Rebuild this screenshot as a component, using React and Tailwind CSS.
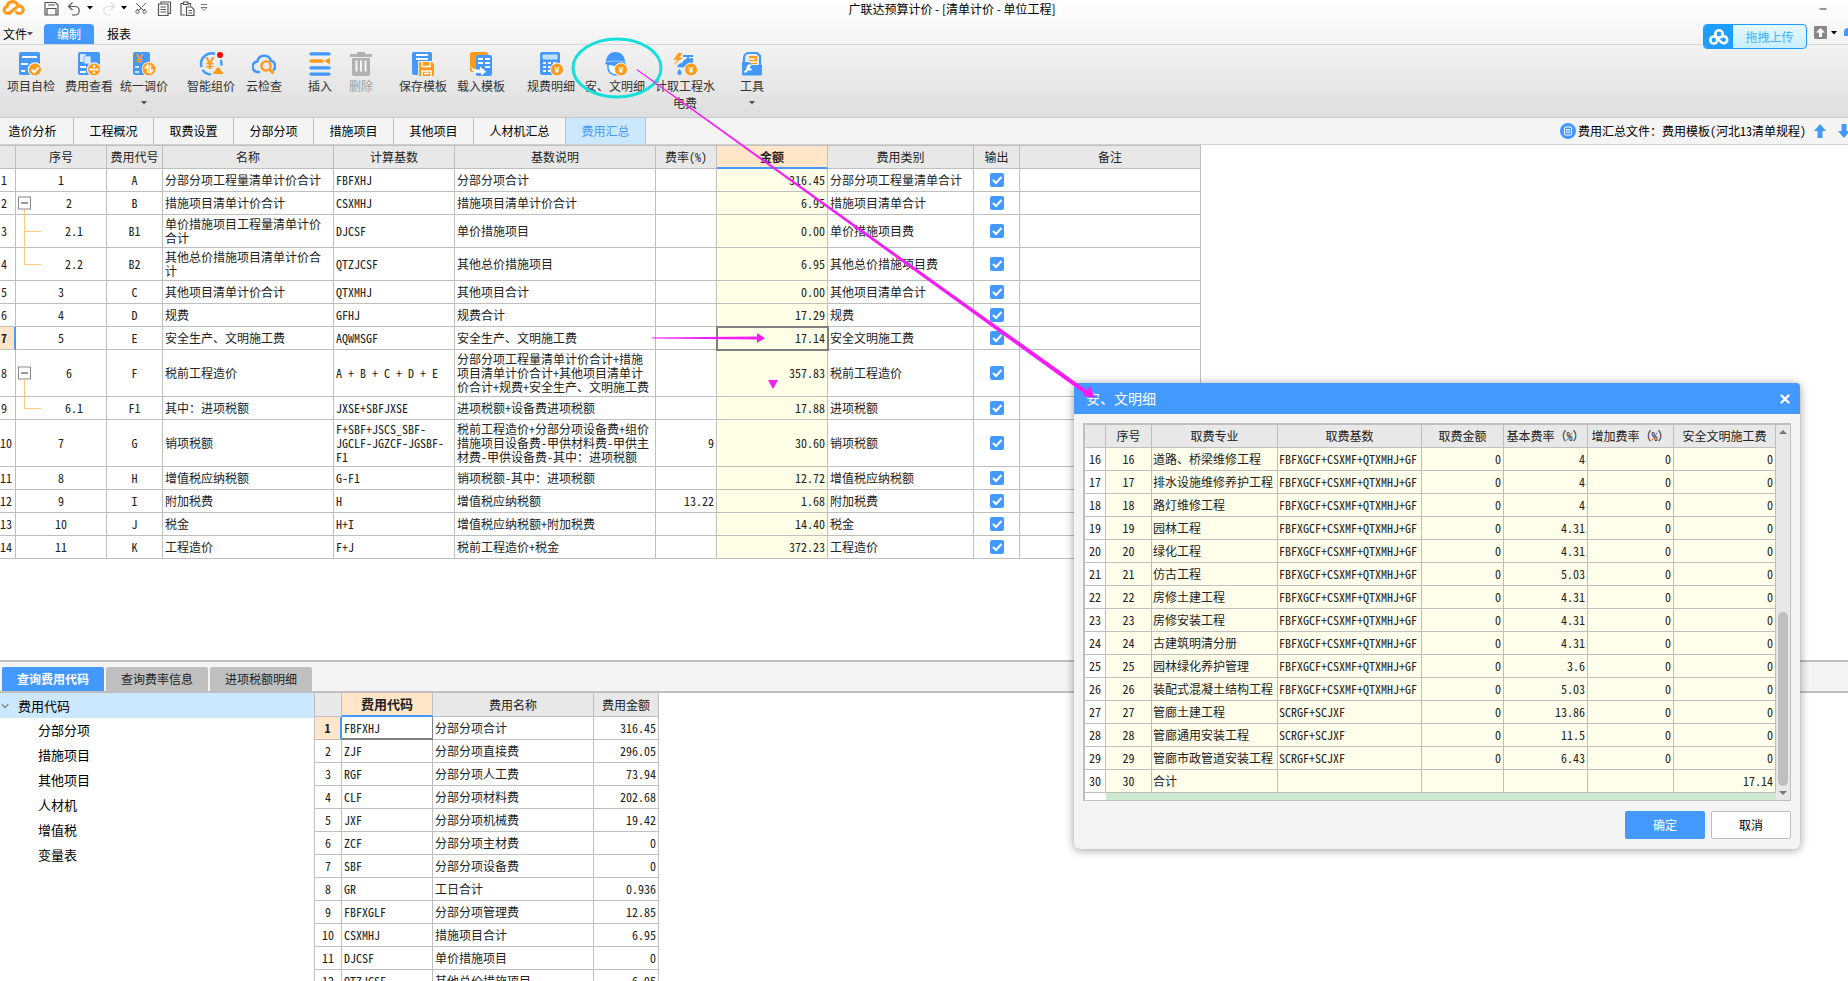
import { ChevronDown, Minus, Scissors, X } from 'lucide-react';

const BLUE = '#4499ff';
const ORANGE = '#ff9a1a';

const TABS = [
	{ label: '造价分析', width: 'w-[74px] pr-2' },
	{ label: '工程概况', width: 'w-20' },
	{ label: '取费设置', width: 'w-20' },
	{ label: '分部分项', width: 'w-20' },
	{ label: '措施项目', width: 'w-20' },
	{ label: '其他项目', width: 'w-20' },
	{ label: '人材机汇总', width: 'w-[92px]' },
	{ label: '费用汇总', width: 'w-20', active: true },
];

const FEES = [
	{ no: '1', code: 'A', name: '分部分项工程量清单计价合计', base: 'FBFXHJ', desc: '分部分项合计', amount: '316.45', kind: '分部分项工程量清单合计' },
	{ no: '2', code: 'B', name: '措施项目清单计价合计', base: 'CSXMHJ', desc: '措施项目清单计价合计', amount: '6.95', kind: '措施项目清单合计', tree: 'open' },
	{ no: '2.1', code: 'B1', name: '单价措施项目工程量清单计价\n合计', base: 'DJCSF', desc: '单价措施项目', amount: '0.00', kind: '单价措施项目费', tree: 'child', h: 'h-[33px]' },
	{ no: '2.2', code: 'B2', name: '其他总价措施项目清单计价合\n计', base: 'QTZJCSF', desc: '其他总价措施项目', amount: '6.95', kind: '其他总价措施项目费', tree: 'last', h: 'h-[33px]' },
	{ no: '3', code: 'C', name: '其他项目清单计价合计', base: 'QTXMHJ', desc: '其他项目合计', amount: '0.00', kind: '其他项目清单合计' },
	{ no: '4', code: 'D', name: '规费', base: 'GFHJ', desc: '规费合计', amount: '17.29', kind: '规费' },
	{ no: '5', code: 'E', name: '安全生产、文明施工费', base: 'AQWMSGF', desc: '安全生产、文明施工费', amount: '17.14', kind: '安全文明施工费', selected: true },
	{ no: '6', code: 'F', name: '税前工程造价', base: 'A + B + C + D + E', desc: '分部分项工程量清单计价合计+措施\n项目清单计价合计+其他项目清单计\n价合计+规费+安全生产、文明施工费', amount: '357.83', kind: '税前工程造价', tree: 'open', h: 'h-[47px]' },
	{ no: '6.1', code: 'F1', name: '其中：进项税额', base: 'JXSE+SBFJXSE', desc: '进项税额+设备费进项税额', amount: '17.88', kind: '进项税额', tree: 'last' },
	{ no: '7', code: 'G', name: '销项税额', base: 'F+SBF+JSCS_SBF-\nJGCLF-JGZCF-JGSBF-\nF1', desc: '税前工程造价+分部分项设备费+组价\n措施项目设备费-甲供材料费-甲供主\n材费-甲供设备费-其中：进项税额', rate: '9', amount: '30.60', kind: '销项税额', h: 'h-[47px]' },
	{ no: '8', code: 'H', name: '增值税应纳税额', base: 'G-F1', desc: '销项税额-其中：进项税额', amount: '12.72', kind: '增值税应纳税额' },
	{ no: '9', code: 'I', name: '附加税费', base: 'H', desc: '增值税应纳税额', rate: '13.22', amount: '1.68', kind: '附加税费' },
	{ no: '10', code: 'J', name: '税金', base: 'H+I', desc: '增值税应纳税额+附加税费', amount: '14.40', kind: '税金' },
	{ no: '11', code: 'K', name: '工程造价', base: 'F+J', desc: '税前工程造价+税金', amount: '372.23', kind: '工程造价' },
];

const CODES = [
	['FBFXHJ', '分部分项合计', '316.45'],
	['ZJF', '分部分项直接费', '296.05'],
	['RGF', '分部分项人工费', '73.94'],
	['CLF', '分部分项材料费', '202.68'],
	['JXF', '分部分项机械费', '19.42'],
	['ZCF', '分部分项主材费', '0'],
	['SBF', '分部分项设备费', '0'],
	['GR', '工日合计', '0.936'],
	['FBFXGLF', '分部分项管理费', '12.85'],
	['CSXMHJ', '措施项目合计', '6.95'],
	['DJCSF', '单价措施项目', '0'],
	['QTZJCSF', '其他总价措施项目', '6.95'],
];

const LONG_BASE = 'FBFXGCF+CSXMF+QTXMHJ+GF';
const SHORT_BASE = 'SCRGF+SCJXF';
const DETAILS = [
	[16, '道路、桥梁维修工程', LONG_BASE, '0', '4', '0', '0'],
	[17, '排水设施维修养护工程', LONG_BASE, '0', '4', '0', '0'],
	[18, '路灯维修工程', LONG_BASE, '0', '4', '0', '0'],
	[19, '园林工程', LONG_BASE, '0', '4.31', '0', '0'],
	[20, '绿化工程', LONG_BASE, '0', '4.31', '0', '0'],
	[21, '仿古工程', LONG_BASE, '0', '5.03', '0', '0'],
	[22, '房修土建工程', LONG_BASE, '0', '4.31', '0', '0'],
	[23, '房修安装工程', LONG_BASE, '0', '4.31', '0', '0'],
	[24, '古建筑明清分册', LONG_BASE, '0', '4.31', '0', '0'],
	[25, '园林绿化养护管理', LONG_BASE, '0', '3.6', '0', '0'],
	[26, '装配式混凝土结构工程', LONG_BASE, '0', '5.03', '0', '0'],
	[27, '管廊土建工程', SHORT_BASE, '0', '13.86', '0', '0'],
	[28, '管廊通用安装工程', SHORT_BASE, '0', '11.5', '0', '0'],
	[29, '管廊市政管道安装工程', SHORT_BASE, '0', '6.43', '0', '0'],
	[30, '合计', '', '', '', '', '17.14'],
];

/* ---------- icons ---------- */

function Icon({ children }) {
	return (
		<svg viewBox="0 0 24 24" className="w-6 h-6 flex-shrink-0" fill="none" aria-hidden="true">
			{children}
		</svg>
	);
}

function SmallIcon({ d, className = '' }) {
	return (
		<svg viewBox="0 0 15 15" className={`w-[15px] h-[15px] ${className}`} fill="none" stroke="currentColor" strokeWidth="1.2" aria-hidden="true">
			<path d={d} />
		</svg>
	);
}

const UNDO = 'M5.5 1.5L1.5 5.5l4 3.5M1.5 5.5H8a4 4 0 0 1 0 8.5H5';

function Coin({ x = 17, y = 17 }) {
	return (
		<>
			<circle cx={x} cy={y} r="7" fill="#eee" />
			<circle cx={x} cy={y} r="6" fill={ORANGE} />
			<text x={x} y={y + 3} textAnchor="middle" fontSize="9" fontWeight="700" fontFamily="Liberation Sans" fill="#fff">¥</text>
		</>
	);
}

const ICONS = {
	check: (
		<Icon>
			<rect width="21" height="23" rx="2" fill={BLUE} />
			<path d="M3 5h15M2 12h7M2 19h4" stroke="#fff" strokeWidth="2" />
			<circle cx="16" cy="17.5" r="7.3" fill="#eee" />
			<circle cx="16" cy="17.5" r="6" fill={ORANGE} />
			<path d="M12.6 17.6l2.6 2.6 4.4-4.8" stroke="#fff" strokeWidth="2" />
		</Icon>
	),
	view: (
		<Icon>
			<rect x="1" width="22" height="23" rx="2" fill={BLUE} />
			<rect x="3" y="2" width="6" height="8" rx="1" fill="#d6eaff" />
			<rect x="7" y="4" width="7" height="8" rx="1" fill="#d6eaff" stroke={BLUE} strokeWidth=".6" />
			<path d="M3 15h6M3 20h6" stroke="#fff" strokeWidth="2" />
			<circle cx="17" cy="17.5" r="7.3" fill="#eee" />
			<circle cx="17" cy="17.5" r="6" fill={ORANGE} />
			<path d="M12.5 17.5h9" stroke="#fff" strokeWidth="1.8" />
			<circle cx="17" cy="14.2" r="1.2" fill="#fff" />
			<circle cx="17" cy="20.8" r="1.2" fill="#fff" />
		</Icon>
	),
	adjust: (
		<Icon>
			<rect x="1" width="17" height="23" rx="2" fill={BLUE} />
			<text x="7" y="11" textAnchor="middle" fontSize="13" fontWeight="700" fontFamily="Liberation Sans" fill={ORANGE}>¥</text>
			<path d="M3 15h4M3 20h4" stroke="#fff" strokeWidth="1.6" />
			<circle cx="17" cy="17" r="7.3" fill="#eee" />
			<circle cx="17" cy="17" r="6.5" fill={ORANGE} />
			<path d="M15.7 21v-7.6l-2.7 3M18.3 13v7.6l2.7-3" stroke="#fff" strokeWidth="1.7" />
		</Icon>
	),
	smart: (
		<Icon>
			<path d="M16 1.9A10.5 10.5 0 0 0 2.500 15M3.500 17.800A10.500 10.500 0 0 0 12 22.400M21.800 8a10.500 10.500 0 0 1 .4 5.500" stroke={BLUE} strokeWidth="2.4" />
			<text x="11" y="17" textAnchor="middle" fontSize="16" fontWeight="700" fontFamily="Liberation Sans" fill={ORANGE}>¥</text>
			<path d="M14 22c0-2 1.6-3 2.6-3.200 0-2 1.200-3.300 2.700-3.300s2.400 1.500 2.400 3.200c1.300.3 2.300 1.500 2.300 3.300z" fill={ORANGE} />
			<circle cx="21" cy="3" r="3" fill="#f00" />
		</Icon>
	),
	cloud: (
		<Icon>
			<path d="M8 20H6.5A5.300 5.300 0 0 1 5.300 9.400 7 7 0 0 1 18.900 8.800 5.500 5.500 0 0 1 21 18.600" stroke={BLUE} strokeWidth="2.6" />
			<circle cx="14" cy="14" r="4.6" stroke={ORANGE} strokeWidth="2.4" />
			<path d="M17.5 17.5l4 4" stroke={ORANGE} strokeWidth="2.6" />
		</Icon>
	),
	insert: (
		<Icon>
			<path d="M3 1.9h18M3 15.9h18M3 22.1h18" stroke={BLUE} strokeWidth="3.4" strokeLinecap="round" />
			<path d="M3 9h11" stroke={ORANGE} strokeWidth="3.4" strokeLinecap="round" />
			<path d="M16 9l6-3.5v7z" fill={ORANGE} />
		</Icon>
	),
	trash: (
		<Icon>
			<path d="M1 2h7V0h8v2h7v3H1z" fill="#b2b2b2" />
			<path d="M3 6h18v16a2 2 0 0 1-2 2H5a2 2 0 0 1-2-2z" fill="#b2b2b2" />
			<path d="M7.5 8.5v11M12 8.5v11M16.5 8.5v11" stroke="#f4f4f4" strokeWidth="2" />
		</Icon>
	),
	save: (
		<Icon>
			<rect x="1" width="20" height="23" rx="2" fill={BLUE} />
			<path d="M5 3h12M5 7h12" stroke="#fff" strokeWidth="1.8" />
			<path d="M7 9h17v16H7z" fill="#eee" />
			<path d="M8 10h13l2 2v12H8z" fill={ORANGE} />
			<path d="M11 10v4.500h8V10M11 24v-5h9v5M13 21.500h5" stroke="#fff" strokeWidth="1.500" />
		</Icon>
	),
	load: (
		<Icon>
			<rect x="1" width="18" height="20" rx="2" fill={ORANGE} />
			<rect x="7" y="3" width="16" height="21" rx="2" fill={BLUE} />
			<path d="M9 7h5M16 7h5M9 11h5M16 11h5M16 15h5" stroke="#fff" strokeWidth="2" />
			<path d="M2 14c1 3 5 4 9 3.500v-3l6 5-5 4.500v-3C6 21.500 2 19 2 14z" fill="#fff" />
		</Icon>
	),
	calc: (
		<Icon>
			<rect x="1" width="20" height="23" rx="2" fill={BLUE} />
			<rect x="3.5" y="2.5" width="15" height="5" rx="1" fill="#bfe0ff" />
			<path d="M4 11h3M9 11h3M14 11h3M4 15h3M9 15h2M4 19h3M9 19h2" stroke="#fff" strokeWidth="2" />
			<Coin x={18} y={17.5} />
		</Icon>
	),
	helmet: (
		<Icon>
			<path d="M5 12h15v4c0 4-3 7-7 7s-8-3-8-7z" fill="#fff" stroke={BLUE} strokeWidth="1.6" />
			<path d="M3 10C3 4 7 0 12.5 0S22 4 22 10l1 2.5c-5 .8-7 1.5-10 2-4-1-7-1.5-11-2.5z" fill={BLUE} />
			<path d="M3.5 9.8c6-1 12-1 18 0" stroke="#9ccbff" strokeWidth="1" />
			<Coin x={18} y={17.5} />
		</Icon>
	),
	water: (
		<Icon>
			<path d="M5.5 1L1 7.500h4.500L1.500 12 9 6H5.800L9 1.500z" fill={ORANGE} stroke={ORANGE} strokeWidth=".6" />
			<path d="M10 4h10M15 3v4" stroke={BLUE} strokeWidth="2" />
			<path d="M4 15c1-3 3-4 5-4 1-3 4-5 7-4.500l4-.5v5h-4c-1 2-4 3-5 4.500z" fill={BLUE} />
			<path d="M6.500 17c1.600 2 2.200 3 2.200 3.800a2.200 2.200 0 0 1-4.400 0c0-.8.700-1.800 2.200-3.800z" fill={BLUE} />
			<Coin x={18} y={17.5} />
		</Icon>
	),
	tools: (
		<Icon>
			<path d="M4 12V6a5 5 0 0 1 5-5h8l3 3v9" stroke={BLUE} strokeWidth="2.200" />
			<rect x="9" y="4" width="8" height="8" fill={ORANGE} />
			<path d="M9 7h6M9 10h8" stroke="#fff" strokeWidth="1.4" />
			<path d="M2 10h7l3 3h10v9a1.5 1.5 0 0 1-1.5 1.5h-17A1.5 1.5 0 0 1 2 22z" fill={BLUE} />
			<path d="M4.500 20.500l4-4" stroke="#fff" strokeWidth="2.200" />
			<path d="M11.500 13.200a3 3 0 1 0 .8 3.600l-2-.3-.5-1.500z" fill="#fff" />
		</Icon>
	),
};

function Caret({ className = 'text-[#555]' }) {
	return (
		<svg viewBox="0 0 6 4" className={`w-[6px] h-1 flex-shrink-0 ${className}`} aria-hidden="true">
			<path d="M0 0h6L3 3.5z" fill="currentColor" />
		</svg>
	);
}

/* ---------- header ---------- */

const TOOLS = [
	[
		{ icon: 'check', label: '项目自检', w: 'w-[58px]' },
		{ icon: 'view', label: '费用查看', w: 'w-[58px]' },
		{ icon: 'adjust', label: '统一调价', w: 'w-[52px]', caret: true },
	],
	[
		{ icon: 'smart', label: '智能组价', w: 'w-[58px]' },
		{ icon: 'cloud', label: '云检查', w: 'w-12' },
	],
	[
		{ icon: 'insert', label: '插入', w: 'w-10' },
		{ icon: 'trash', label: '删除', w: 'w-[42px]', disabled: true },
	],
	[
		{ icon: 'save', label: '保存模板', w: 'w-[58px]' },
		{ icon: 'load', label: '载入模板', w: 'w-[58px]' },
	],
	[
		{ icon: 'calc', label: '规费明细', w: 'w-[58px]' },
		{ icon: 'helmet', label: '安、文明细', w: 'w-[70px]' },
		{ icon: 'water', label: '计取工程水\n电费', w: 'w-[70px]' },
	],
	[{ icon: 'tools', label: '工具', w: 'w-10', caret: true }],
];

function Header() {
	return (
		<header className="bg-linear-to-b from-white to-[#dedede] border-b border-[#c8c8c8]">
			<div className="h-6 flex items-start">
				<div className="w-52 flex items-center h-4 text-[#555]">
					<svg viewBox="0 0 24 17" className="w-6 h-4 ml-[2px] mr-[18px]" fill="none" strokeLinecap="round" aria-hidden="true">
						<path d="M7 14H5.5A3.5 3.5 0 0 1 4.5 7 6 6 0 0 1 15.5 4.500" stroke={ORANGE} strokeWidth="3.4" />
						<path d="M7.5 13.5L15 7.500a4 4 0 1 1 3.500 6.800c-2 .3-3-.3-4-1.300" stroke={ORANGE} strokeWidth="3.200" />
					</svg>
					<button aria-label="保存"><SmallIcon d="M1 1.500h10.500l2.500 2.500v10H1zM4 4h7M3 14V7.500h9V14" /></button>
					<button aria-label="撤销" className="ml-2 flex items-center gap-[5px]"><SmallIcon d={UNDO} /><Caret className="text-black" /></button>
					<button aria-label="恢复" className="ml-2 flex items-center gap-[5px] text-[#ddd]"><SmallIcon d={UNDO} className="-scale-x-100" /><Caret className="text-black" /></button>
					<button aria-label="剪切" className="ml-[7px]"><Scissors size={14} strokeWidth={1.6} className="-rotate-90" /></button>
					<button aria-label="复制" className="ml-[9px]"><SmallIcon d="M4 3V1h9.500v11.500H11M1.500 3H11v11.500H1.500zM3.500 6H9M3.500 8.500H9M3.500 11H9" /></button>
					<button aria-label="粘贴" className="ml-2"><SmallIcon d="M5 14H1V2.500h2.500M8 2.500h2.500V5M3.500 1h4.500v2.500H3.500zM6.500 6h5l2.500 2.500v6H6.500zM8.500 9.500H12M8.500 12H12" /></button>
					<button aria-label="更多" className="ml-[5px]">
						<svg viewBox="0 0 8 8" className="w-2 h-2" fill="none" stroke="#777" aria-hidden="true"><path d="M1 .5h6M1 3.500h6L4 6.500z" /></svg>
					</button>
				</div>
				<h1 className="flex-1 text-center leading-[18px]">广联达预算计价 - [清单计价 - 单位工程]</h1>
				<div className="w-[152px] flex justify-end pr-5">
					<button aria-label="最小化" className="pt-1"><Minus size={10} strokeWidth={4} className="text-[#777]" /></button>
				</div>
			</div>

			<nav className="h-[21px] border-b border-[#d5d5d5] flex items-stretch">
				<button className="w-11 pl-[3px] flex items-center whitespace-nowrap">文件<Caret /></button>
				<button className="w-[50px] bg-[#4499ff] text-white rounded-t-sm">编制</button>
				<button className="w-[50px]">报表</button>
				<div className="ml-auto flex items-start gap-1">
					<button className="h-[25px] w-[104px] flex items-center rounded-sm border border-[#1e9bff] bg-linear-to-b from-[#e6f8ff] to-[#c6efff] text-[#45adff] overflow-hidden">
						<span className="w-[29px] h-full bg-[#1e9fff] flex items-center justify-center">
							<svg viewBox="0 0 20 16" className="w-5 h-4" fill="none" stroke="#fff" strokeWidth="2.6" aria-hidden="true">
								<circle cx="10" cy="5" r="3.7" />
								<circle cx="4.8" cy="11" r="3.5" />
								<path d="M12 8.500a3.500 3.500 0 1 1 .3 4.800L8 9" />
							</svg>
						</span>
						<span className="flex-1">拖拽上传</span>
					</button>
					<button aria-label="上传" className="ml-[3px] mt-[2px] flex items-center gap-1">
						<svg viewBox="0 0 13 13" className="w-[13px] h-[13px]" aria-hidden="true">
							<rect width="13" height="13" rx="1" fill="#888" />
							<path d="M6.5 2L11 6.500H8V11H5V6.500H2z" fill="#fff" />
						</svg>
						<Caret className="text-black" />
					</button>
					<span className="w-1 h-2 mt-1 ml-[3px] rounded-tl-full bg-[#4499ff]" />
				</div>
			</nav>

			<div className="h-[72px] pl-[2px] pt-[7px] flex gap-3">
				{TOOLS.map((group, i) => (
					<div key={i} className="flex">
						{group.map((tool) => (
							<button
								key={tool.icon}
								disabled={tool.disabled}
								className={`flex flex-col items-center whitespace-pre leading-[17px] ${tool.w} ${tool.disabled ? 'text-[#a0a0a0]' : 'text-[#333]'}`}
							>
								{ICONS[tool.icon]}
								<span className="mt-px">{tool.label}</span>
								{tool.caret && <span className="mt-[7px]"><Caret /></span>}
							</button>
						))}
					</div>
				))}
			</div>
		</header>
	);
}

function TabBar() {
	return (
		<div className="h-[27px] bg-[#f4f4f4] border-b border-[#d0d0d0] flex">
			{TABS.map((tab) => (
				<button
					key={tab.label}
					className={`border-r border-[#bfbfbf] ${tab.width} ${tab.active ? 'bg-[#cce8ff] text-[#4499ff]' : ''}`}
				>
					{tab.label}
				</button>
			))}
			<div className="ml-auto flex items-center overflow-hidden">
				<svg viewBox="0 0 16 16" className="w-4 h-4 mr-[2px]" aria-hidden="true">
					<circle cx="8" cy="8" r="8" fill={BLUE} />
					<rect x="4.5" y="4" width="7" height="8" rx="1" fill="none" stroke="#fff" />
					<path d="M6 6.5h4M6 8h4M6 9.5h4" stroke="#fff" strokeWidth=".8" />
				</svg>
				<span className="font-['Noto_Sans_Mono_CJK_SC','Noto_Sans_CJK_SC',sans-serif]">费用汇总文件：费用模板(河北13清单规程)</span>
				<button aria-label="上移" className="ml-2">
					<svg viewBox="0 0 12 14" className="w-3 h-[14px]" aria-hidden="true">
						<path d="M6 0l6 7H8.500v7h-5V7H0z" fill={BLUE} />
					</svg>
				</button>
				<button aria-label="下移" className="ml-3 -mr-[2px]">
					<svg viewBox="0 0 12 14" className="w-3 h-[14px]" aria-hidden="true">
						<path d="M6 14l6-7H8.500V0h-5v7H0z" fill={BLUE} />
					</svg>
				</button>
			</div>
		</div>
	);
}

/* ---------- grids ---------- */

function Cols({ widths }) {
	return (
		<colgroup>
			{widths.map((w, i) => (
				<col key={i} style={{ width: w }} />
			))}
		</colgroup>
	);
}

function Th({ children, className = 'bg-[#e8e8e8] border-b border-b-[#bfbfbf] font-normal' }) {
	return <th className={`p-0 border-r border-r-[#bfbfbf] whitespace-nowrap ${className}`}>{children}</th>;
}

function Td({ children, className = '' }) {
	return <td className={`p-0 border-r border-b border-[#bfbfbf] whitespace-pre ${className}`}>{children}</td>;
}

const ACTIVE_TH = 'bg-[#ffe6c9] border-b-2 border-b-[#4499ff] font-bold';
const GRID = "table-fixed border-separate border-spacing-0 leading-[14px] text-[#222] font-['Noto_Sans_Mono_CJK_SC','Noto_Sans_CJK_SC',sans-serif]";

function SeqCell({ row }) {
	const line = 'absolute bg-[#ffc880]';
	const pad = row.tree === 'open' ? 'pl-4' : row.tree ? 'pl-[26px]' : '';
	return (
		<td className={`relative p-0 border-r border-b border-[#bfbfbf] text-center ${pad}`}>
			{row.tree === 'open' && (
				<>
					<span className={`${line} left-2 top-1/2 -bottom-px w-px`} />
					<button aria-label="折叠" className="absolute left-[2px] top-1/2 -translate-y-1/2 w-[13px] h-[13px] bg-white border border-[#888] flex items-center justify-center">
						<span className="w-[7px] h-px bg-[#333]" />
					</button>
				</>
			)}
			{row.tree === 'child' && <span className={`${line} left-2 top-0 -bottom-px w-px`} />}
			{row.tree === 'last' && <span className={`${line} left-2 top-0 bottom-1/2 w-px`} />}
			{(row.tree === 'child' || row.tree === 'last') && <span className={`${line} left-2 top-1/2 w-[17px] h-px`} />}
			{row.no}
		</td>
	);
}

function FeeTable() {
	return (
		<table className={`${GRID} w-[1201px] border-t border-[#bfbfbf]`}>
			<Cols widths={[16, 91, 56, 171, 121, 201, 61, 111, 146, 46, 181]} />
			<thead>
				<tr className="h-[23px]">
					<Th />
					<Th>序号</Th>
					<Th>费用代号</Th>
					<Th>名称</Th>
					<Th>计算基数</Th>
					<Th>基数说明</Th>
					<Th>费率(%)</Th>
					<Th className={ACTIVE_TH}>金额</Th>
					<Th>费用类别</Th>
					<Th>输出</Th>
					<Th>备注</Th>
				</tr>
			</thead>
			<tbody>
				{FEES.map((row, i) => (
					<tr key={row.no} className={row.h || 'h-[23px]'}>
						<td className={`p-0 border-b border-b-[#bfbfbf] ${i < 9 ? 'pl-px' : ''} ${row.selected ? 'bg-[#ffe6c9] font-bold border-r-2 border-r-[#4499ff]' : 'border-r border-r-[#bfbfbf]'}`}>{i + 1}</td>
						<SeqCell row={row} />
						<Td className="text-center">{row.code}</Td>
						<Td className="pl-[2px]">{row.name}</Td>
						<Td className="pl-[2px]">{row.base}</Td>
						<Td className="pl-[2px]">{row.desc}</Td>
						<Td className="text-right pr-[2px]">{row.rate}</Td>
						<Td className={`text-right pr-[2px] bg-[#ffffe8] ${row.selected ? 'outline-2 -outline-offset-1 outline-[#808080]' : ''}`}>{row.amount}</Td>
						<Td className="pl-[2px]">{row.kind}</Td>
						<Td>
							<span className="grid place-items-center">
								<input type="checkbox" defaultChecked aria-label={`输出 ${row.kind}`} className="appearance-none col-start-1 row-start-1 w-[14px] h-[14px] rounded-[2px] bg-[#4499ff]" />
								<svg viewBox="0 0 14 14" className="col-start-1 row-start-1 w-[14px] h-[14px] pointer-events-none" fill="none" aria-hidden="true">
									<path d="M3 7l3 3 5.5-6" stroke="#fff" strokeWidth="2" />
								</svg>
							</span>
						</Td>
						<Td />
					</tr>
				))}
			</tbody>
		</table>
	);
}

function CodeTable() {
	return (
		<table className={`${GRID} w-[345px] border-l border-[#bfbfbf]`}>
			<Cols widths={[27, 91, 161, 65]} />
			<thead>
				<tr className="h-6">
					<Th />
					<Th className={`${ACTIVE_TH} text-[13px]`}>费用代码</Th>
					<Th>费用名称</Th>
					<Th>费用金额</Th>
				</tr>
			</thead>
			<tbody>
				{CODES.map(([code, name, amount], i) => (
					<tr key={code} className="h-[23px]">
						<td className={`p-0 text-center border-b border-b-[#bfbfbf] ${i === 0 ? 'bg-[#ffe6c9] font-bold border-r-2 border-r-[#4499ff]' : 'border-r border-r-[#bfbfbf]'}`}>{i + 1}</td>
						<td className={`p-0 pl-[2px] ${i === 0 ? 'border-r border-b-2 border-[#808080]' : 'border-r border-b border-[#bfbfbf]'}`}>{code}</td>
						<Td className="pl-[2px]">{name}</Td>
						<Td className="text-right pr-[2px]">{amount}</Td>
					</tr>
				))}
			</tbody>
		</table>
	);
}

function BottomPanel() {
	return (
		<section className="h-[321px] flex-shrink-0 border-t-2 border-[#bfbfbf] flex flex-col overflow-hidden">
			<div className="h-[31px] flex-shrink-0 bg-[#f4f4f4] border-b-2 border-[#bfbfbf] flex items-end gap-[2px] pl-[2px]">
				<button className="w-[102px] h-6 rounded-t-[2px] bg-[#4499ff] text-white font-bold">查询费用代码</button>
				<button className="w-[102px] h-6 rounded-t-[2px] bg-[#bfbfbf] text-[#222]">查询费率信息</button>
				<button className="w-[102px] h-6 rounded-t-[2px] bg-[#bfbfbf] text-[#222]">进项税额明细</button>
			</div>
			<div className="flex-1 flex items-start min-h-0">
				<ul className="w-[314px] text-[13px] leading-[25px]">
					<li>
						<div className="flex items-center h-[25px] leading-[23px] bg-[#cce8ff]">
							<ChevronDown size={12} strokeWidth={2.5} className="text-[#888] -ml-px mr-[7px]" />
							费用代码
						</div>
						<ul className="pl-[38px]">
							{['分部分项', '措施项目', '其他项目', '人材机', '增值税', '变量表'].map((item) => (
								<li key={item} className="h-[25px] leading-[23px]">{item}</li>
							))}
						</ul>
					</li>
				</ul>
				<CodeTable />
			</div>
		</section>
	);
}

/* ---------- dialog ---------- */

function DetailDialog() {
	return (
		<div role="dialog" aria-label="安、文明细" className="absolute top-[383px] right-12 w-[726px] rounded-md bg-[#f4f4f4] shadow-[0_1px_10px_rgba(0,0,0,0.4)]">
			<div className="h-[31px] px-3 flex items-center justify-between bg-[#4499ff] text-white text-[14px] rounded-t-sm">
				<h2>安、文明细</h2>
				<button aria-label="关闭" className="-mr-1"><X size={14} strokeWidth={4} /></button>
			</div>
			<div className="p-[9px] pb-[10px]">
				<div className="flex border border-t-2 border-l-2 border-[#bfbfbf]">
					<div className="flex-1 min-w-0 bg-white">
						<table className={`${GRID} w-[691px]`}>
							<Cols widths={[21, 46, 126, 144, 82, 84, 86, 102]} />
							<thead>
								<tr className="h-[23px]">
									<Th />
									<Th>序号</Th>
									<Th>取费专业</Th>
									<Th>取费基数</Th>
									<Th>取费金额</Th>
									<Th>基本费率（%）</Th>
									<Th>增加费率（%）</Th>
									<Th>安全文明施工费</Th>
								</tr>
							</thead>
							<tbody>
								{DETAILS.map(([no, name, base, ...nums]) => (
									<tr key={no} className="h-[23px] bg-[#ffffec]">
										<Td className="bg-white text-center">{no}</Td>
										<Td className="text-center">{no}</Td>
										<Td className="pl-px">{name}</Td>
										<Td className="pl-px">{base}</Td>
										{nums.map((n, i) => (
											<Td key={i} className="text-right pr-[2px]">{n}</Td>
										))}
									</tr>
								))}
							</tbody>
						</table>
						<div className="h-[7px] ml-[21px] bg-[#cde8cf]" />
					</div>
					<div className="w-[14px] bg-[#e8e8e8] flex flex-col items-center justify-between py-[5px]">
						<svg viewBox="0 0 8 4" className="w-2 h-1" aria-hidden="true"><path d="M0 4h8L4 0z" fill="#777" /></svg>
						<span className="mt-auto mb-[5px] w-[10px] h-[174px] rounded-full bg-[#bfbfbf]" />
						<svg viewBox="0 0 8 4" className="w-2 h-1" aria-hidden="true"><path d="M0 0h8L4 4z" fill="#777" /></svg>
					</div>
				</div>
				<div className="mt-[10px] flex justify-end gap-[6px]">
					<button className="w-20 h-7 rounded-[2px] bg-[#4499ff] text-white">确定</button>
					<button className="w-20 h-7 rounded-[2px] bg-white border border-[#bfbfbf]">取消</button>
				</div>
			</div>
		</div>
	);
}

// hand-drawn marks lying over the window
function Marks() {
	return (
		<svg width="1200" height="420" className="absolute top-0 left-0 pointer-events-none" aria-hidden="true">
			<ellipse cx="617" cy="68" rx="44" ry="29" fill="none" stroke="#16dedb" strokeWidth="3" />
			<g fill="#f41df4">
				<path d="M637 69L1088 391l-2.500 3.500L636.500 70z" />
				<path d="M1095 398l-5-12-7 10z" />
				<path d="M652 337.500L757 336.500v-3.500l8 5-8 5v-3.500L652 338.500z" />
				<path d="M768 380h10l-5 9z" />
			</g>
		</svg>
	);
}

export default function App() {
	return (
		<div className="relative h-screen flex flex-col overflow-hidden bg-white text-black text-[12px] font-['Noto_Sans_CJK_SC',sans-serif]">
			<Header />
			<TabBar />
			<main className="flex-1 min-h-0 overflow-hidden">
				<FeeTable />
			</main>
			<BottomPanel />
			<DetailDialog />
			<Marks />
		</div>
	);
}
